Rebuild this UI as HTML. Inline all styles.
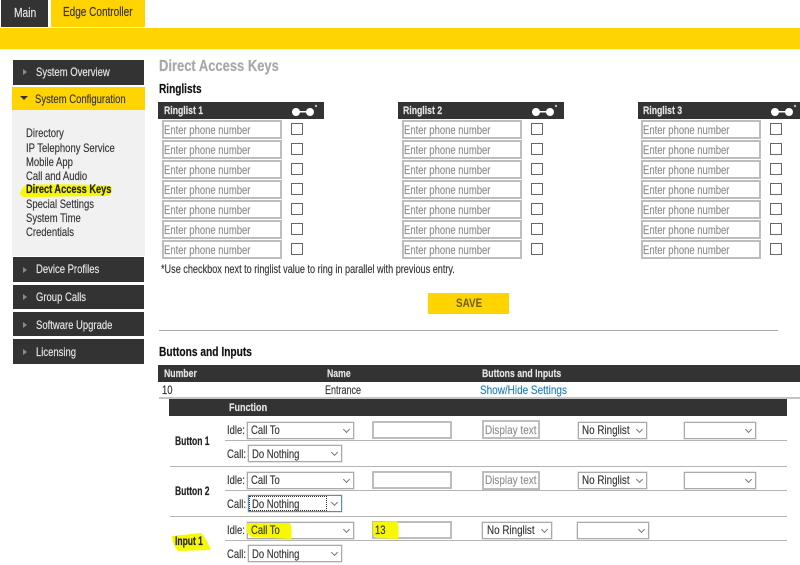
<!DOCTYPE html>
<html><head><meta charset="utf-8">
<style>
html,body{margin:0;padding:0;background:#fff}
#p{position:relative;width:800px;height:565px;overflow:hidden;background:#fff;font-family:"Liberation Sans",sans-serif;color:#333;filter:blur(.3px)}
#p div{position:absolute;box-sizing:border-box}
.t{white-space:nowrap;font-size:12px;line-height:14px;transform:scaleX(.79);transform-origin:0 50%;-webkit-text-stroke:.15px currentColor}
.d{background:#333}
.y{background:#ffd400}
.w{color:#e8e8e8}
.b{font-weight:bold;-webkit-text-stroke:.2px currentColor}
.hd{color:#e6e6e6;font-weight:bold;font-size:11px;transform:scaleX(.79)}
.i{width:120px;height:19px;border:2px solid #bdbdbd;background:#fff}
.ph{color:#8e8e8e}
.c{width:12px;height:12px;border:1px solid #666;background:#fff}
.s{height:17px;border:1px solid #aaa;box-shadow:0 0 0 .5px #ccc;background:#fff}
.s::after{content:"";position:absolute;right:4px;top:4px;width:4px;height:4px;border-right:1px solid #777;border-bottom:1px solid #777;transform:rotate(45deg)}
.l{height:1px;background:#b4b4b4;left:170px;width:617px}
.ls{left:225px;width:562px}
.m{width:0;height:0;border-left:4px solid #8a8a8a;border-top:3px solid transparent;border-bottom:3px solid transparent;left:23px}
.lb{color:#222;font-size:12px;transform:scaleX(.71)}
</style></head><body><div id="p">

<div class="d" style="left:1px;top:0;width:47px;height:27px"></div>
<div class="t w" style="left:14px;top:6px;font-size:13px">Main</div>
<div class="y" style="left:51px;top:0;width:94px;height:27px"></div>
<div class="t" style="left:63px;top:5px;font-size:13px;transform:scaleX(.77)">Edge Controller</div>
<div class="y" style="left:0;top:28px;width:800px;height:21px"></div>

<div class="d" style="left:13px;top:60px;width:131px;height:25px"></div>
<div class="m" style="top:69px"></div>
<div class="t w" style="left:36px;top:65px">System Overview</div>
<div class="y" style="left:12px;top:87px;width:133px;height:23px"></div>
<div style="left:20px;top:96px;width:0;height:0;border-top:4px solid #333;border-left:4px solid transparent;border-right:4px solid transparent"></div>
<div class="t" style="left:35px;top:92px">System Configuration</div>
<div style="left:12px;top:110px;width:133px;height:146px;background:#f1f1f1"></div>
<svg style="position:absolute;left:0;top:0" width="800" height="565"><path d="M21 194 C22 190 23 188 27 186 C50 185 90 185 110 187 C112 189 111 193 108 195 C80 195 45 196 24 196 Z" fill="#f8f800" stroke="#f8f800" stroke-width="2" stroke-linejoin="round"/></svg>
<div class="t" style="left:26px;top:126px">Directory</div>
<div class="t" style="left:26px;top:141px">IP Telephony Service</div>
<div class="t" style="left:26px;top:155px">Mobile App</div>
<div class="t" style="left:26px;top:169px">Call and Audio</div>
<div class="t b" style="left:26px;top:182px;color:#222;transform:scaleX(.77)">Direct Access Keys</div>
<div class="t" style="left:26px;top:197px">Special Settings</div>
<div class="t" style="left:26px;top:211px">System Time</div>
<div class="t" style="left:26px;top:225px">Credentials</div>
<div class="d" style="left:13px;top:257px;width:131px;height:25px"></div>
<div class="m" style="top:267px"></div>
<div class="t w" style="left:36px;top:262px">Device Profiles</div>
<div class="d" style="left:13px;top:285px;width:131px;height:24px"></div>
<div class="m" style="top:294px"></div>
<div class="t w" style="left:36px;top:290px">Group Calls</div>
<div class="d" style="left:13px;top:312px;width:131px;height:24px"></div>
<div class="m" style="top:322px"></div>
<div class="t w" style="left:36px;top:318px">Software Upgrade</div>
<div class="d" style="left:13px;top:339px;width:131px;height:25px"></div>
<div class="m" style="top:349px"></div>
<div class="t w" style="left:36px;top:345px">Licensing</div>

<div class="t b" style="left:159px;top:60px;font-size:16px;color:#a8a8a8;transform:scaleX(.81)">Direct Access Keys</div>
<div class="t b" style="left:159px;top:82px;color:#111;font-size:13px;transform:scaleX(.775)">Ringlists</div>

<div class="d" style="left:158px;top:102px;width:166px;height:17px"></div>
<div class="t hd" style="left:164px;top:104px">Ringlist 1</div>
<svg style="position:absolute;left:290px;top:102px" width="30" height="17"><circle cx="6" cy="10" r="4" fill="#fff"/><circle cx="20" cy="10" r="4" fill="#fff"/><rect x="6" y="9" width="14" height="1.5" fill="#fff"/><circle cx="26" cy="4" r="1.2" fill="#bbb"/></svg>
<div class="d" style="left:398px;top:102px;width:166px;height:17px"></div>
<div class="t hd" style="left:403px;top:104px">Ringlist 2</div>
<svg style="position:absolute;left:530px;top:102px" width="30" height="17"><circle cx="6" cy="10" r="4" fill="#fff"/><circle cx="20" cy="10" r="4" fill="#fff"/><rect x="6" y="9" width="14" height="1.5" fill="#fff"/><circle cx="26" cy="4" r="1.2" fill="#bbb"/></svg>
<div class="d" style="left:638px;top:102px;width:162px;height:17px"></div>
<div class="t hd" style="left:643px;top:104px">Ringlist 3</div>
<svg style="position:absolute;left:769px;top:102px" width="30" height="17"><circle cx="6" cy="10" r="4" fill="#fff"/><circle cx="20" cy="10" r="4" fill="#fff"/><rect x="6" y="9" width="14" height="1.5" fill="#fff"/><circle cx="26" cy="4" r="1.2" fill="#bbb"/></svg>

<div class="i" style="left:162px;top:120px"></div><div class="t ph" style="left:164px;top:123px">Enter phone number</div><div class="c" style="left:291px;top:123px"></div>
<div class="i" style="left:162px;top:140px"></div><div class="t ph" style="left:164px;top:143px">Enter phone number</div><div class="c" style="left:291px;top:143px"></div>
<div class="i" style="left:162px;top:160px"></div><div class="t ph" style="left:164px;top:163px">Enter phone number</div><div class="c" style="left:291px;top:163px"></div>
<div class="i" style="left:162px;top:180px"></div><div class="t ph" style="left:164px;top:183px">Enter phone number</div><div class="c" style="left:291px;top:183px"></div>
<div class="i" style="left:162px;top:200px"></div><div class="t ph" style="left:164px;top:203px">Enter phone number</div><div class="c" style="left:291px;top:203px"></div>
<div class="i" style="left:162px;top:220px"></div><div class="t ph" style="left:164px;top:223px">Enter phone number</div><div class="c" style="left:291px;top:223px"></div>
<div class="i" style="left:162px;top:240px"></div><div class="t ph" style="left:164px;top:243px">Enter phone number</div><div class="c" style="left:291px;top:243px"></div>

<div class="i" style="left:402px;top:120px"></div><div class="t ph" style="left:404px;top:123px">Enter phone number</div><div class="c" style="left:531px;top:123px"></div>
<div class="i" style="left:402px;top:140px"></div><div class="t ph" style="left:404px;top:143px">Enter phone number</div><div class="c" style="left:531px;top:143px"></div>
<div class="i" style="left:402px;top:160px"></div><div class="t ph" style="left:404px;top:163px">Enter phone number</div><div class="c" style="left:531px;top:163px"></div>
<div class="i" style="left:402px;top:180px"></div><div class="t ph" style="left:404px;top:183px">Enter phone number</div><div class="c" style="left:531px;top:183px"></div>
<div class="i" style="left:402px;top:200px"></div><div class="t ph" style="left:404px;top:203px">Enter phone number</div><div class="c" style="left:531px;top:203px"></div>
<div class="i" style="left:402px;top:220px"></div><div class="t ph" style="left:404px;top:223px">Enter phone number</div><div class="c" style="left:531px;top:223px"></div>
<div class="i" style="left:402px;top:240px"></div><div class="t ph" style="left:404px;top:243px">Enter phone number</div><div class="c" style="left:531px;top:243px"></div>

<div class="i" style="left:641px;top:120px"></div><div class="t ph" style="left:643px;top:123px">Enter phone number</div><div class="c" style="left:770px;top:123px"></div>
<div class="i" style="left:641px;top:140px"></div><div class="t ph" style="left:643px;top:143px">Enter phone number</div><div class="c" style="left:770px;top:143px"></div>
<div class="i" style="left:641px;top:160px"></div><div class="t ph" style="left:643px;top:163px">Enter phone number</div><div class="c" style="left:770px;top:163px"></div>
<div class="i" style="left:641px;top:180px"></div><div class="t ph" style="left:643px;top:183px">Enter phone number</div><div class="c" style="left:770px;top:183px"></div>
<div class="i" style="left:641px;top:200px"></div><div class="t ph" style="left:643px;top:203px">Enter phone number</div><div class="c" style="left:770px;top:203px"></div>
<div class="i" style="left:641px;top:220px"></div><div class="t ph" style="left:643px;top:223px">Enter phone number</div><div class="c" style="left:770px;top:223px"></div>
<div class="i" style="left:641px;top:240px"></div><div class="t ph" style="left:643px;top:243px">Enter phone number</div><div class="c" style="left:770px;top:243px"></div>

<div class="t" style="left:161px;top:262px;transform:scaleX(.76)">*Use checkbox next to ringlist value to ring in parallel with previous entry.</div>
<div class="y" style="left:428px;top:293px;width:81px;height:21px"></div>
<div class="t b" style="left:456px;top:297px;color:#6a5f10;font-size:11.5px;transform:scaleX(.86);-webkit-text-stroke:0">SAVE</div>
<div style="left:159px;top:330px;width:619px;height:1px;background:#aaa"></div>

<div class="t b" style="left:159px;top:345px;color:#111;font-size:13px;transform:scaleX(.785)">Buttons and Inputs</div>
<div class="d" style="left:158px;top:365px;width:642px;height:17px"></div>
<div class="t hd" style="left:164px;top:367px">Number</div>
<div class="t hd" style="left:327px;top:367px">Name</div>
<div class="t hd" style="left:482px;top:367px">Buttons and Inputs</div>
<div class="t" style="left:162px;top:383px">10</div>
<div class="t" style="left:325px;top:383px;transform:scaleX(.75)">Entrance</div>
<div class="t" style="left:480px;top:383px;color:#1f7fb8;transform:scaleX(.83)">Show/Hide Settings</div>
<div style="left:159px;top:397px;width:641px;height:2px;background:#c4c4c4"></div>
<div class="d" style="left:169px;top:399px;width:618px;height:17px"></div>
<div class="t hd" style="left:229px;top:401px;transform:scaleX(.82)">Function</div>

<div class="t b lb" style="left:175px;top:434px">Button 1</div>
<div class="t" style="left:227px;top:423px">Idle:</div>
<div class="s" style="left:247px;top:422px;width:107px"></div><div class="t" style="left:251px;top:423px">Call To</div>
<div class="i" style="left:372px;top:421px;width:80px;height:18px"></div>
<div class="i" style="left:482px;top:420px;width:58px;height:19px"></div><div class="t ph" style="left:485px;top:423px;transform:scaleX(.83)">Display text</div>
<div class="s" style="left:578px;top:422px;width:69px"></div><div class="t" style="left:582px;top:423px;transform:scaleX(.82)">No Ringlist</div>
<div class="s" style="left:684px;top:422px;width:72px"></div>
<div class="l ls" style="top:440px"></div>
<div class="t" style="left:227px;top:447px">Call:</div>
<div class="s" style="left:248px;top:445px;width:94px"></div><div class="t" style="left:252px;top:447px">Do Nothing</div>
<div class="l" style="top:466px"></div>

<div class="t b lb" style="left:175px;top:484px">Button 2</div>
<div class="t" style="left:227px;top:473px">Idle:</div>
<div class="s" style="left:247px;top:472px;width:107px"></div><div class="t" style="left:251px;top:473px">Call To</div>
<div class="i" style="left:372px;top:471px;width:80px;height:18px"></div>
<div class="i" style="left:482px;top:471px;width:58px;height:19px"></div><div class="t ph" style="left:485px;top:473px;transform:scaleX(.83)">Display text</div>
<div class="s" style="left:578px;top:472px;width:69px"></div><div class="t" style="left:582px;top:473px;transform:scaleX(.82)">No Ringlist</div>
<div class="s" style="left:684px;top:472px;width:72px"></div>
<div class="l ls" style="top:490px"></div>
<div class="t" style="left:227px;top:497px">Call:</div>
<div class="s" style="left:248px;top:495px;width:94px;border-color:#4a90d9"></div>
<div style="left:249px;top:496px;width:78px;height:15px;border:1px dotted #333"></div>
<div class="t" style="left:252px;top:497px">Do Nothing</div>
<div class="l" style="top:516px"></div>

<div class="t" style="left:227px;top:523px">Idle:</div>
<div class="s" style="left:247px;top:522px;width:107px"></div>
<div class="i" style="left:372px;top:521px;width:80px;height:18px"></div>
<svg style="position:absolute;left:0;top:0" width="800" height="565"><path d="M172 536 L201 533 C206 537 209 546 211 550 L178 551 C174 546 172 541 172 536 Z" fill="#f8f800"/><path d="M247 523 L290 523 C292 528 292 533 291 539 L252 537 L247 533 Z" fill="#f8f800"/><path d="M373 522 L397 521 C399 526 399 533 398 539 L376 538 L373 534 Z" fill="#f8f800"/></svg>
<div class="t b lb" style="left:175px;top:534px">Input 1</div>
<div class="t" style="left:251px;top:523px">Call To</div>
<div class="t" style="left:375px;top:523px">13</div>
<div class="s" style="left:482px;top:522px;width:70px"></div><div class="t" style="left:487px;top:523px;transform:scaleX(.82)">No Ringlist</div>
<div class="s" style="left:577px;top:522px;width:72px"></div>
<div class="l ls" style="top:540px"></div>
<div class="t" style="left:227px;top:547px">Call:</div>
<div class="s" style="left:248px;top:545px;width:94px"></div><div class="t" style="left:252px;top:547px">Do Nothing</div>

</div></body></html>
